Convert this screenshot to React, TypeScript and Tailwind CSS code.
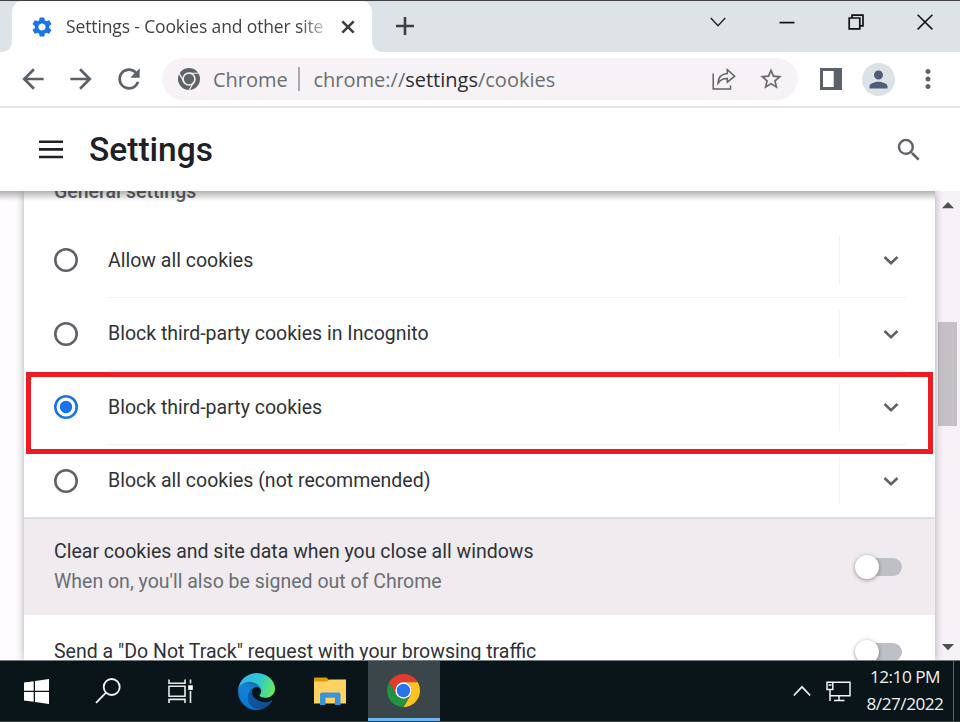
import React from "react";
import {
  MdArrowBack,
  MdArrowForward,
  MdMoreVert,
  MdPerson,
  MdRefresh,
  MdSearch,
  MdSettings,
  MdStarBorder,
} from "react-icons/md";

const segoe = "font-['Open_Sans','Noto_Sans',sans-serif]";

function TabStrip() {
  return (
    <div className="flex h-[52px] shrink-0 border-t border-[#413f42] bg-[#dee3e7]">
      <div className="w-3 bg-white">
        <div className="h-[51px] w-3 rounded-br-[10px] bg-[#dee3e7]" />
      </div>
      <div className="bg-[#dee3e7]">
        <div className="flex h-[51px] w-[360px] items-center rounded-t-[11px] bg-white pl-[18px]">
          <MdSettings className="size-6 text-[#1a73e8]" />
          <div
            className={`mb-0.5 ml-3 w-[260px] overflow-hidden text-[17.5px] leading-6 tracking-[-0.13px] whitespace-nowrap text-[#3f4347] [mask-image:linear-gradient(to_right,black_90%,transparent_103%)] ${segoe}`}
          >
            Settings - Cookies and other site
          </div>
          <svg className="ml-[15px] size-[14px]" viewBox="0 0 14 14" stroke="#3c4043" strokeWidth="2.6">
            <path d="M1.3 1.3l11.4 11.4M12.7 1.3L1.3 12.7" />
          </svg>
        </div>
      </div>
      <div className="flex flex-1 bg-white">
        <div className="flex h-[51px] flex-1 items-start rounded-bl-[11px] bg-[#dee3e7]">
          <svg className="mt-4 ml-6 size-[18px]" viewBox="0 0 18 18" stroke="#3c4043" strokeWidth="2.6">
            <path d="M9 0v18M0 9h18" />
          </svg>
          <div className="mt-[13px] mr-[27px] ml-auto flex gap-[53px]">
            <svg className="size-4" viewBox="0 0 16 16" fill="none" stroke="#222" strokeWidth="1.4">
              <path d="M.8 4l7.2 7.8L15.2 4" />
            </svg>
            <svg className="size-4" viewBox="0 0 16 16" stroke="#111" strokeWidth="1.7">
              <path d="M.5 8.6h15" />
            </svg>
            <svg className="size-4" viewBox="0 0 16 16" fill="none" stroke="#111" strokeWidth="1.7">
              <path d="M1.2 4h10.6v10.8H1.2zM4 4V1.2h11v10.6h-3.2" />
            </svg>
            <svg className="size-4" viewBox="0 0 16 16" stroke="#111" strokeWidth="1.5">
              <path d="M.6.8l14.8 14.6M15.4.8L.6 15.4" />
            </svg>
          </div>
        </div>
      </div>
    </div>
  );
}

function GreyChrome() {
  return (
    <svg className="size-[22px]" viewBox="0 0 48 48">
      <circle cx="24" cy="24" r="24" fill="#5f6368" />
      <circle cx="24" cy="24" r="13" fill="none" stroke="#f6f2f6" strokeWidth="3.4" />
      <path
        d="M24 11.5H45M13.2 30.2L2.5 11.8M34.8 30.2L24.5 48"
        stroke="#f6f2f6"
        strokeWidth="2.6"
      />
    </svg>
  );
}

function Toolbar() {
  return (
    <div className="flex h-14 shrink-0 items-center border-b-2 border-[#e6e4e7] bg-white pl-[17px] text-[#5a6168]">
      <MdArrowBack className="size-8" />
      <MdArrowForward className="ml-4 size-8" />
      <MdRefresh className="ml-4 size-8" />
      <div
        className={`ml-[17px] flex h-[42px] w-[636px] items-center rounded-full bg-[#f6f2f6] pl-4 text-[20px] text-[#6a6d72] ${segoe}`}
      >
        <GreyChrome />
        <span className="ml-[13px] w-[74px] pt-px whitespace-nowrap">Chrome</span>
        <span className="ml-[11px] h-6 w-[1.5px] bg-[#a9a9ae]" />
        <span className="ml-[14px] pt-px whitespace-nowrap">
          chrome://<span className="text-[#2a2b2e]">settings</span>/cookies
        </span>
        <svg className="mr-[22px] ml-auto size-6" viewBox="0 0 24 24" fill="none" stroke="#5f6368" strokeWidth="1.5">
          <path d="M1.2 6.5V22H18.5V18.5" />
          <path d="M6 16.2C6.3 9.8 10.2 7 15.3 6.6V2.6L22.7 9.2L15.3 15.2V11.4C11.5 11.2 8.5 12.6 6 16.2Z" />
        </svg>
        <MdStarBorder className="mr-[14px] size-[26px]" />
      </div>
      <svg className="ml-[22px] size-[22px]" viewBox="0 0 22 22">
        <path d="M0 0h22v22H0z" fill="#5a616a" />
        <path d="M3 3h10.7v16H3z" fill="#fff" />
      </svg>
      <div className="ml-5 flex size-[33px] items-center justify-center rounded-full bg-[#dde2e6]">
        <MdPerson className="size-[27px] text-[#515c78]" />
      </div>
      <MdMoreVert className="ml-[17.5px] size-[30px]" />
    </div>
  );
}

function SettingsHeader() {
  return (
    <header className="relative z-10 flex h-[83px] shrink-0 items-center bg-white pr-[36px] pl-[39px]">
      <svg className="h-[19px] w-6" viewBox="0 0 24 19" fill="#202124">
        <path d="M0 .5h24v2.6H0zM0 8.1h24v2.6H0zM0 15.7h24v2.6H0z" />
      </svg>
      <h1 className="ml-[26px] pt-0.5 font-['Roboto',sans-serif] text-[33.5px] font-medium text-[#202124]">
        Settings
      </h1>
      <MdSearch className="ml-auto size-[30px] text-[#5f6368]" />
    </header>
  );
}

function CookieOption({ label, checked, last }: { label: string; checked?: boolean; last?: boolean }) {
  return (
    <div className="flex h-[73.5px] shrink-0 pl-[30px]">
      <div className="flex w-[54px] items-center pb-px">
        <svg className="size-6" viewBox="0 0 24 24">
          <circle cx="12" cy="12" r="10.7" fill="none" stroke={checked ? "#1a73e8" : "#5f6368"} strokeWidth="2.6" />
          {checked && <circle cx="12" cy="12" r="6.2" fill="#1a73e8" />}
        </svg>
      </div>
      <div className={`flex w-[798px] items-center border-b ${last ? "border-transparent" : "border-[#f3f1f4]"}`}>
        <span className="flex-1 pt-px text-[#303236]">{label}</span>
        <div className="flex h-12 w-[67px] items-center justify-end border-l border-[#f3f1f4] pr-[7px]">
          <svg className="size-4" viewBox="0 0 16 16" fill="none" stroke="#5f6368" strokeWidth="2.6">
            <path d="M1.5 5L8 11.3L14.5 5" />
          </svg>
        </div>
      </div>
    </div>
  );
}

function Toggle() {
  return (
    <div className="mr-[33.5px] flex h-[18px] w-[45px] items-center rounded-full bg-[#bdc1c6]">
      <div className="-ml-0.5 size-6 rounded-full bg-white shadow-[0_1px_4px_rgba(0,0,0,0.4)]" />
    </div>
  );
}

function Content() {
  return (
    <main className="flex h-[469px] shrink-0 overflow-hidden font-['Roboto',sans-serif] text-[19.5px] leading-[30px]">
      <div className="relative flex min-w-0 flex-1 bg-[#fefcfe] pl-6">
        <div className="relative flex w-[911px] flex-col bg-white shadow-[0_0_8px_rgba(60,50,64,0.4)]">
          <h2 className="-mt-[14px] ml-[30px] h-[47px] shrink-0 font-medium text-[#5f6368]">General settings</h2>
          <CookieOption label="Allow all cookies" />
          <CookieOption label="Block third-party cookies in Incognito" />
          <CookieOption label="Block third-party cookies" checked />
          <CookieOption label="Block all cookies (not recommended)" last />
          <div className="-mt-px flex h-[98px] shrink-0 items-center justify-between border-t-2 border-[#e0dde1] bg-[#efebef] pl-[30px]">
            <div>
              <div className="text-[#303236]">Clear cookies and site data when you close all windows</div>
              <div className="text-[#6b6e74]">When on, you'll also be signed out of Chrome</div>
            </div>
            <Toggle />
          </div>
          <div className="flex h-[74px] shrink-0 items-center justify-between pl-[30px]">
            <span className="text-[#303236]">Send a "Do Not Track" request with your browsing traffic</span>
            <Toggle />
          </div>
        </div>
        <div className="absolute inset-x-0 top-0 h-[10px] bg-linear-to-b from-black/30 to-transparent" />
        <div className="absolute top-[181px] left-[26px] h-[82px] w-[907px] border-5 border-[#ed1c24]" />
      </div>
      <div className="flex w-[25px] shrink-0 flex-col items-center bg-[#f6f2f6]">
        <svg className="mt-[10px] h-2 w-3" viewBox="0 0 12 8">
          <path d="M0 7.2L6 1L12 7.2Z" fill="#505052" />
        </svg>
        <div className="mt-[113px] h-[104px] w-[19px] bg-[#c5c2c6]" />
        <svg className="mt-auto mb-[9px] h-2 w-3" viewBox="0 0 12 8">
          <path d="M0 1L6 7.2L12 1Z" fill="#505052" />
        </svg>
      </div>
    </main>
  );
}

function EdgeLogo() {
  return (
    <svg className="size-[37px]" viewBox="0 0 256 256">
      <defs>
        <linearGradient id="edgeNavy" x1="60" y1="180" x2="240" y2="180" gradientUnits="userSpaceOnUse">
          <stop offset="0" stopColor="#0c59a4" />
          <stop offset="1" stopColor="#114a8b" />
        </linearGradient>
        <linearGradient id="edgeBlue" x1="150" y1="90" x2="40" y2="240" gradientUnits="userSpaceOnUse">
          <stop offset="0" stopColor="#1470b8" />
          <stop offset="0.4" stopColor="#1583d4" />
          <stop offset="1" stopColor="#0078d4" />
        </linearGradient>
        <linearGradient id="edgeGreen" x1="10" y1="60" x2="240" y2="150" gradientUnits="userSpaceOnUse">
          <stop offset="0" stopColor="#35b5ec" />
          <stop offset="0.5" stopColor="#2fc8d4" />
          <stop offset="1" stopColor="#66eb58" />
        </linearGradient>
      </defs>
      <g transform="translate(-4.63 -4.92)">
        <path
          fill="url(#edgeNavy)"
          d="M235.68 195.46a93.73 93.73 0 0 1-10.54 4.71 101.87 101.87 0 0 1-35.9 6.46c-47.32 0-88.54-32.55-88.54-74.32A31.48 31.48 0 0 1 117.13 105c-42.8 1.8-53.8 46.4-53.8 72.53 0 73.88 68.09 81.37 82.76 81.37 7.91 0 19.84-2.3 27-4.56l1.31-.44a128.34 128.34 0 0 0 66.6-52.8 4 4 0 0 0-5.32-5.64Z"
        />
        <path
          fill="url(#edgeBlue)"
          d="M110.34 246.34A79.2 79.2 0 0 1 87.6 225a80.72 80.72 0 0 1 29.53-120c3.12-1.47 8.45-4.13 15.54-4a32.35 32.35 0 0 1 25.69 13 31.88 31.88 0 0 1 6.36 18.66c0-.21 24.46-79.6-80-79.6-43.9 0-80 41.66-80 78.21a130.15 130.15 0 0 0 12.11 56 128 128 0 0 0 156.38 67.11 75.55 75.55 0 0 1-62.87-8Z"
        />
      </g>
      <path
        fill="url(#edgeGreen)"
        d="M152.33 148.86c-.81 1.05-3.3 2.5-3.3 5.66 0 2.61 1.7 5.12 4.72 7.23 14.38 10 41.49 8.68 41.56 8.68a59.56 59.56 0 0 0 30.27-8.35 61.38 61.38 0 0 0 30.43-52.88c.26-22.41-8-37.31-11.34-43.91C223.46 23.84 177.72 0 128 0A128 128 0 0 0 0 126.2c.48-36.54 36.8-66.05 80-66.05 3.5 0 23.46.34 42 10.07 16.34 8.58 24.9 18.94 30.85 29.21 6.18 10.67 7.28 24.15 7.28 29.52s-2.74 13.33-7.8 19.91Z"
      />
    </svg>
  );
}

function ChromeLogo() {
  return (
    <svg className="mt-px size-[33px]" viewBox="0 0 48 48">
      <path fill="#e33b2e" d="M24 12H44.78A24 24 0 0 0 3.22 12L13.6 30A12 12 0 0 1 24 12Z" />
      <path fill="#fcc31e" d="M34.39 30L24 48A24 24 0 0 0 44.78 12H24A12 12 0 0 1 34.39 30Z" />
      <path fill="#22933f" d="M13.61 30L3.22 12A24 24 0 0 0 24 48L34.39 30A12 12 0 0 1 13.61 30Z" />
      <circle cx="24" cy="24" r="12" fill="#fff" />
      <circle cx="24" cy="24" r="9.8" fill="#2a72ea" />
    </svg>
  );
}

function Taskbar() {
  return (
    <footer className="flex h-[62px] shrink-0 border-t border-b border-t-[#747b7e] border-b-[#3b3d40] bg-[#0a1519]">
      <div className="flex w-[72px] items-center justify-center">
        <svg className="size-[25px]" viewBox="0 0 25 25" fill="#fff">
          <path d="M0 3.6L9.7 2.2V11.8H0zM11 2L25 0V11.8H11zM0 13.1H9.7V22.7L0 21.4zM11 13.1H25V25L11 23z" />
        </svg>
      </div>
      <div className="flex w-[72px] items-center justify-center">
        <svg className="size-[26px]" viewBox="0 0 26 26" fill="none" stroke="#f2f4f5" strokeWidth="1.8">
          <circle cx="16.7" cy="9" r="8" />
          <path d="M11 14.7L1 24.8" />
        </svg>
      </div>
      <div className="flex w-[72px] items-center justify-center">
        <svg className="size-[25px]" viewBox="0 0 25 25" fill="none" stroke="#e8eaeb" strokeWidth="1.6">
          <path d="M1 .5v3.7h16V.5M1 7.3h16v10H1zM1 24v-3.6h16V24M22.5 .5v4M22.5 12v12" />
          <path d="M20.2 6.3h4.6v4.6h-4.6z" fill="#fff" stroke="none" />
        </svg>
      </div>
      <div className="flex w-[80px] items-center justify-center">
        <EdgeLogo />
      </div>
      <div className="flex w-[71.5px] items-center justify-center">
        <svg className="-ml-1 h-7 w-8" viewBox="0 0 32 28">
          <path d="M0 1.5Q0 .5 1 .5H12.5L15 3V8H0z" fill="#dc9a08" />
          <path d="M0 4.5H13L15.5 2.6H32V26.5H0z" fill="#fdd260" />
          <path d="M6 28V17.5Q6 15.5 8 15.5H24.5Q26.5 15.5 26.5 17.5V28H21V20.8H11.5V28z" fill="#3a94dc" />
        </svg>
      </div>
      <div className="flex w-[72px] items-center justify-center border-b-[3px] border-[#6fb7ee] bg-[#3b464b]">
        <ChromeLogo />
      </div>
      <div className="ml-auto flex items-center">
        <svg className="size-[18px]" viewBox="0 0 18 18" fill="none" stroke="#e8eaeb" strokeWidth="1.8">
          <path d="M.8 13.5L9 4.8L17.2 13.5" />
        </svg>
        <svg className="ml-[15px] h-[21px] w-[25px]" viewBox="0 0 25 21" fill="none" stroke="#f2f4f5" strokeWidth="1.5">
          <path d="M7 1.2H24V14.8H4.5M1 1.2H6.8V8.5H1zM2.5 4H5.5M4 8.5V20M13 15V19.4M8 19.6H18.5" />
        </svg>
        <div
          className={`mb-0.5 ml-[14px] w-20 text-center text-[17.2px] leading-[27px] tracking-[-0.5px] whitespace-nowrap text-[#f0f2f3] ${segoe}`}
        >
          <div>12:10 PM</div>
          <div>8/27/2022</div>
        </div>
        <div className="ml-[8px] h-full w-px bg-[#5b6366]" />
        <div className="w-[6px]" />
      </div>
    </footer>
  );
}

export default function App() {
  return (
    <div className="flex h-[722px] w-[960px] flex-col overflow-hidden bg-white">
      <TabStrip />
      <Toolbar />
      <SettingsHeader />
      <Content />
      <Taskbar />
    </div>
  );
}
